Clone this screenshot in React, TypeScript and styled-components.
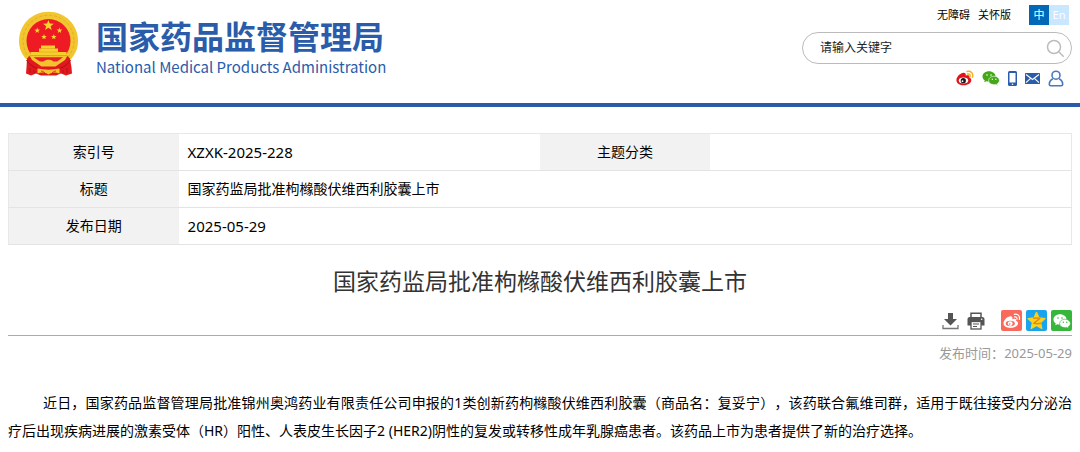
import React from "react";
import styled, { createGlobalStyle } from "styled-components";

const BLUE = "#2a5caa";

const GlobalStyle = createGlobalStyle`
  *, *::before, *::after { box-sizing: border-box; }
  body {
    margin: 0;
    background: #fff;
    color: #000;
    font-family: "Noto Sans", "Noto Sans CJK SC", sans-serif;
    font-size: 14px;
    text-spacing-trim: space-all;
  }
  a { color: inherit; text-decoration: none; }
  svg { display: block; }
`;

/* ---------- header ---------- */

const Header = styled.header`
  display: flex;
  justify-content: space-between;
  align-items: flex-start;
  padding: 5px 8px 16px 19px;
  border-bottom: 4px solid ${BLUE};
`;

const Brand = styled.a`
  display: flex;
  gap: 17px;
  padding-top: 6px;
  color: ${BLUE};
`;

const BrandText = styled.div`
  display: flex;
  flex-direction: column;
  gap: 4px;
  padding-top: 6px;
`;

const BrandName = styled.span`
  font-family: "Noto Sans CJK SC", sans-serif;
  font-size: 32px;
  font-weight: 700;
  line-height: 36px;
  white-space: nowrap;
`;

const BrandEnglish = styled.span`
  font-family: "Noto Sans CJK SC", sans-serif;
  font-size: 15px;
  line-height: 20px;
  white-space: nowrap;
`;

const Side = styled.div`
  display: flex;
  flex-direction: column;
  flex: 0 0 270px;
`;

const TopLinks = styled.nav`
  display: flex;
  justify-content: flex-end;
  align-items: center;
  gap: 8px;
  padding-right: 3px;
  font-size: 11px;
  line-height: 20px;
`;

const LangSwitch = styled.div`
  display: flex;
  margin-left: 10px;
`;

const LangButton = styled.button<{ $active?: boolean }>`
  width: 20px;
  height: 20px;
  padding: 0;
  border: 0;
  background: ${(p) => (p.$active ? "#0068b7" : "#c9e7ff")};
  color: #fff;
  font: inherit;
  line-height: 20px;
`;

const Search = styled.form`
  display: flex;
  align-items: center;
  height: 32px;
  margin: 7px 0 5px;
  padding: 0 6px 0 17px;
  border: 1px solid #bbb;
  border-radius: 16px;
`;

const SearchInput = styled.input`
  flex: 1;
  min-width: 0;
  padding: 0;
  border: 0;
  outline: 0;
  background: transparent;
  color: #222;
  font: inherit;
  font-size: 12px;
  line-height: 20px;
  &::placeholder { color: #222; opacity: 1; }
`;

const IconButton = styled.button`
  padding: 0;
  border: 0;
  background: none;
`;

const Social = styled.div`
  display: flex;
  justify-content: flex-end;
  align-items: center;
  gap: 8px;
  height: 18px;
  padding-right: 8px;
`;

/* ---------- content ---------- */

const Main = styled.main`
  padding: 26px 8px 0;
`;

const InfoTable = styled.table`
  width: 100%;
  border-collapse: collapse;
  table-layout: fixed;
  border: 1px solid #e8e8e8;
`;

const Column = styled.col<{ $label?: boolean }>`
  width: ${(p) => (p.$label ? 16 : 34)}%;
`;

const Row = styled.tr`
  height: 37px;
  border-bottom: 1px solid #e4e4e4;
`;

const Label = styled.th`
  padding: 0;
  background: #f2f2f2;
  font-weight: 400;
  line-height: 24px;
`;

const Value = styled.td<{ $numeric?: boolean }>`
  padding: 0 9px;
  font-size: ${(p) => (p.$numeric ? 15 : 14)}px;
  line-height: 24px;
`;

const Title = styled.h1`
  margin: 18px 0 11px;
  color: #333;
  font-size: 23px;
  font-weight: 400;
  line-height: 36px;
  text-align: center;
`;

const Tools = styled.div`
  display: flex;
  justify-content: flex-end;
  align-items: center;
  gap: 8px;
  padding-bottom: 4px;
  border-bottom: 1px solid #aaa;
`;

const Share = styled.div`
  display: flex;
  gap: 4px;
  margin-left: 8px;
`;

const ShareButton = styled.button<{ $color: string }>`
  display: grid;
  place-items: center;
  width: 21px;
  height: 21px;
  padding: 0;
  border: 0;
  border-radius: 2px;
  background: ${(p) => p.$color};
`;

const Published = styled.p`
  margin: 5px 0 24px;
  color: #999;
  font-size: 13px;
  line-height: 24px;
  text-align: right;
`;

const Article = styled.p`
  margin: 0;
  line-height: 28px;
  text-align: justify;
  text-indent: 35px;
`;

/* ---------- drawings ---------- */

const star = (cx: number, cy: number, r: number) =>
  Array.from({ length: 10 }, (_, i) => {
    const a = (Math.PI / 5) * i - Math.PI / 2;
    const d = i % 2 ? r * 0.42 : r;
    return `${(cx + d * Math.cos(a)).toFixed(2)},${(cy + d * Math.sin(a)).toFixed(2)}`;
  }).join(" ");

const Emblem = () => (
  <svg width="60" height="66" viewBox="0 0 60 66" aria-hidden="true">
    <path d="M29.5 .7C13 .7 0 13.500 0 30c0 7 2.500 13 7 18h45c4.500-5 7-11 7-18C59 13.500 46 .7 29.500.7z" fill="#f2c62f" />
    <circle cx="29.500" cy="29.700" r="25.500" fill="none" stroke="#dfa524" strokeWidth=".8" strokeDasharray="3 2" />
    <circle cx="29.500" cy="30" r="22" fill="#ee1a24" />
    <polygon points={star(29.4, 14.5, 5.6)} fill="#f9d52f" />
    <polygon points={star(18.2, 19.6, 3)} fill="#f9d52f" />
    <polygon points={star(40.5, 19.5, 3)} fill="#f9d52f" />
    <polygon points={star(25, 26, 2.9)} fill="#f9d52f" />
    <polygon points={star(34.8, 26, 2.9)} fill="#f9d52f" />
    <path d="M22 34.500h14v3h3v3.500h8.500v4h-36v-4H20v-3.500h2z" fill="#f7cf2d" />
    <path d="M22 37.500h14M20 41h19" stroke="#e3a022" strokeWidth=".7" />
    <path d="M8 47.500l3-3h37l3 3 1.500 9 .5 6-6 2-5-2-5 2H22l-5-2-5 2-5-2 .5-6z" fill="#e3181f" />
    <path d="M10.500 44.500h38l-2.500 4.500-9.500 6.500h-14L13 49z" fill="#f3c42d" />
    <path d="M14.500 46.300h29.500l-6 4.200h-3.500c-2-2.300-8-2.300-10 0H21z" fill="#ea1f25" />
    <path d="M7.500 49c2 3.500 6 7 11 8.500M51.500 49c-2 3.500-6 7-11 8.500" fill="none" stroke="#a90f18" strokeWidth="1" />
    <path d="M18.500 57.500c7 1.500 15 1.500 22 0v5c-4-1.500-7-1.500-11 1-4-2.500-7-2.500-11-1z" fill="#f3c42d" />
    <path d="M22 60c2 .2 3 1 4 2M37 60c-2 .2-3 1-4 2" fill="none" stroke="#d8342a" strokeWidth="1" />
    <path d="M11 57v5M15 59v3M44 59v3M48 57v5" stroke="#b51119" strokeWidth="1" />
  </svg>
);

const Magnifier = () => (
  <svg width="19" height="19" viewBox="0 0 19 19" fill="none" stroke="#bcbcbc" strokeWidth="1.500" aria-hidden="true">
    <circle cx="8" cy="8" r="6.500" />
    <path d="M12.700 12.700l5 5" />
  </svg>
);

const WeiboColor = () => (
  <svg width="18" height="16" viewBox="0 0 18 16" aria-hidden="true">
    <path d="M7.500 2.800C5 2.600.4 6.500.4 10.200c0 3 3.300 5 7.300 5 4.600 0 7.600-2.600 7.600-5 0-1.600-1-2.300-2-2.700.5-1.900-.3-3-3.600-1.900.4-1.700-.2-2.700-2.200-2.800z" fill="#e2141b" />
    <ellipse cx="7.500" cy="10.600" rx="4.700" ry="3" fill="#fff" />
    <circle cx="7.300" cy="10.700" r="2.600" fill="#221718" />
    <circle cx="6.500" cy="11.200" r=".9" fill="#fff" />
    <path d="M11 1.500c3.800-1 6.600 1.900 5.500 5.500M11.500 4.100c1.900-.4 3 .8 2.500 2.500" fill="none" stroke="#f3b21d" strokeWidth="1.500" strokeLinecap="round" />
  </svg>
);

const Wechat = ({ color, eyes }: { color: string; eyes: string }) => (
  <svg width="18" height="16" viewBox="0 0 18 16" aria-hidden="true">
    <path d="M7 1.300C3.500 1.300.5 3.500.5 6.400c0 1.600.9 3 2.300 4l-.6 1.900 2.200-1.100c.8.200 1.700.3 2.600.3 3.600 0 6.500-2.300 6.500-5.100S10.600 1.300 7 1.300z" fill={color} />
    <path d="M12 6.200c-3 0-5.400 1.900-5.400 4.300s2.400 4.200 5.400 4.200c.7 0 1.300-.1 1.900-.3l1.900 1-.5-1.700c1.300-.8 2.100-1.900 2.100-3.200 0-2.400-2.400-4.300-5.400-4.300z" fill={color} stroke={eyes} strokeWidth=".6" />
    <g fill={eyes}>
      <circle cx="5" cy="5" r=".8" />
      <circle cx="9" cy="5" r=".8" />
      <circle cx="10.300" cy="9.300" r=".7" />
      <circle cx="13.800" cy="9.300" r=".7" />
    </g>
  </svg>
);

const Phone = () => (
  <svg width="9" height="15" viewBox="0 0 9 15" aria-hidden="true">
    <rect width="9" height="15" rx="1.500" fill={BLUE} />
    <rect x="1.500" y="2" width="6" height="9.500" fill="#fff" />
    <circle cx="4.500" cy="13.200" r=".8" fill="#fff" />
  </svg>
);

const Mail = () => (
  <svg width="15" height="11" viewBox="0 0 15 11" aria-hidden="true">
    <rect width="15" height="11" rx=".5" fill={BLUE} />
    <path d="M1 1.500l6.500 5 6.500-5M1 9.700l4.300-4M14 9.700l-4.300-4" fill="none" stroke="#fff" strokeWidth="1.100" />
  </svg>
);

const User = () => (
  <svg width="16" height="17" viewBox="0 0 16 17" fill="none" stroke="#4a78bd" strokeWidth="1.600" aria-hidden="true">
    <circle cx="8" cy="5.200" r="4" />
    <path d="M4.800 8.700C2.500 10 1.300 12 1.300 14.300q0 1.500 1.500 1.500h10.400q1.500 0 1.500-1.500c0-2.300-1.200-4.300-3.500-5.600" strokeLinejoin="round" />
  </svg>
);

const Download = () => (
  <svg width="17" height="18" viewBox="0 0 17 18" aria-hidden="true">
    <path d="M6 1h5v6h4l-6.500 6.500L2 7h4z" fill="#555" />
    <path d="M1 13v3.500h15V13" fill="none" stroke="#777" strokeWidth="1.300" />
  </svg>
);

const Printer = () => (
  <svg width="18" height="18" viewBox="0 0 18 18" aria-hidden="true">
    <path d="M4 5V1.200h10V5" fill="none" stroke="#555" strokeWidth="1.500" />
    <path d="M2.500 5h13C16.500 5 17.500 6 17.500 7v6.500h-17V7c0-1 1-2 2-2z" fill="#555" />
    <rect x="4" y="9.500" width="10" height="7.500" fill="#fff" stroke="#555" strokeWidth="1.300" />
    <path d="M6 12h6M6 14.500h4" stroke="#555" strokeWidth="1.200" />
    <circle cx="14.700" cy="7.300" r=".8" fill="#fff" />
  </svg>
);

const WeiboWhite = () => (
  <svg width="18" height="16" viewBox="0 0 18 16" aria-hidden="true">
    <path d="M7.500 3.300C5 3.100.5 7 .5 10.300c0 2.800 3.200 4.700 7 4.700 4.500 0 7.500-2.500 7.500-4.700 0-1.400-1-2.100-2-2.500.5-1.600 0-2.800-3.700-1.600.5-1.500 0-2.800-1.800-2.900z" fill="#fff" />
    <ellipse cx="7.300" cy="10.500" rx="4.500" ry="2.800" fill="#f96a5c" />
    <circle cx="7.200" cy="10.600" r="2.400" fill="#fff" />
    <circle cx="6.700" cy="11" r=".8" fill="#f96a5c" />
    <path d="M11.300 1.300c3.500-.8 6 1.900 5 5.200M11.500 3.900c1.800-.4 2.900.8 2.400 2.400" fill="none" stroke="#fff" strokeWidth="1.200" strokeLinecap="round" />
  </svg>
);

const Qzone = () => (
  <svg width="21" height="21" viewBox="0 0 21 21" aria-hidden="true">
    <path d="M10.500 2.300l2.500 5.500 6 .7-4.400 4.100 1.200 6-5.300-3-5.300 3 1.200-6L2 8.500l6-.7z" fill="#fcd21c" stroke="#fcd21c" strokeWidth="1.200" strokeLinejoin="round" />
    <path d="M7 8.300c2.300-.4 4.500-.4 6.800 0L7.800 13.300c2.300.5 4.700.5 7 0" fill="none" stroke="#e58a12" strokeWidth="1.500" strokeLinejoin="round" />
  </svg>
);

export default function App() {
  return (
    <>
      <GlobalStyle />
      <Header>
        <Brand href="#">
          <Emblem />
          <BrandText>
            <BrandName>国家药品监督管理局</BrandName>
            <BrandEnglish>National Medical Products Administration</BrandEnglish>
          </BrandText>
        </Brand>
        <Side>
          <TopLinks>
            <a href="#">无障碍</a>
            <a href="#">关怀版</a>
            <LangSwitch>
              <LangButton type="button" $active>中</LangButton>
              <LangButton type="button">En</LangButton>
            </LangSwitch>
          </TopLinks>
          <Search onSubmit={(e) => e.preventDefault()}>
            <SearchInput type="text" aria-label="请输入关键字" placeholder="请输入关键字" />
            <IconButton type="submit" aria-label="搜索"><Magnifier /></IconButton>
          </Search>
          <Social>
            <a href="#" aria-label="微博"><WeiboColor /></a>
            <a href="#" aria-label="微信"><Wechat color="#45a818" eyes="#fff" /></a>
            <a href="#" aria-label="手机"><Phone /></a>
            <a href="#" aria-label="邮箱"><Mail /></a>
            <a href="#" aria-label="用户"><User /></a>
          </Social>
        </Side>
      </Header>
      <Main>
        <InfoTable>
          <colgroup>
            <Column $label />
            <Column />
            <Column $label />
            <Column />
          </colgroup>
          <tbody>
            <Row>
              <Label scope="row">索引号</Label>
              <Value $numeric>XZXK-2025-228</Value>
              <Label scope="row">主题分类</Label>
              <Value />
            </Row>
            <Row>
              <Label scope="row">标题</Label>
              <Value colSpan={3}>国家药监局批准枸橼酸伏维西利胶囊上市</Value>
            </Row>
            <Row>
              <Label scope="row">发布日期</Label>
              <Value colSpan={3} $numeric>2025-05-29</Value>
            </Row>
          </tbody>
        </InfoTable>
        <Title>国家药监局批准枸橼酸伏维西利胶囊上市</Title>
        <Tools>
          <IconButton type="button" aria-label="下载"><Download /></IconButton>
          <IconButton type="button" aria-label="打印"><Printer /></IconButton>
          <Share>
            <ShareButton type="button" aria-label="分享到微博" $color="#f96a5c"><WeiboWhite /></ShareButton>
            <ShareButton type="button" aria-label="分享到QQ空间" $color="#1ba4ee"><Qzone /></ShareButton>
            <ShareButton type="button" aria-label="分享到微信" $color="#36b73b"><Wechat color="#fff" eyes="#36b73b" /></ShareButton>
          </Share>
        </Tools>
        <Published>
          发布时间：<time dateTime="2025-05-29">2025-05-29</time>
        </Published>
        <Article>
          近日，国家药品监督管理局批准锦州奥鸿药业有限责任公司申报的1类创新药枸橼酸伏维西利胶囊（商品名：复妥宁），该药联合氟维司群，适用于既往接受内分泌治疗后出现疾病进展的激素受体（HR）阳性、人表皮生长因子2 (HER2)阴性的复发或转移性成年乳腺癌患者。该药品上市为患者提供了新的治疗选择。
        </Article>
      </Main>
    </>
  );
}
